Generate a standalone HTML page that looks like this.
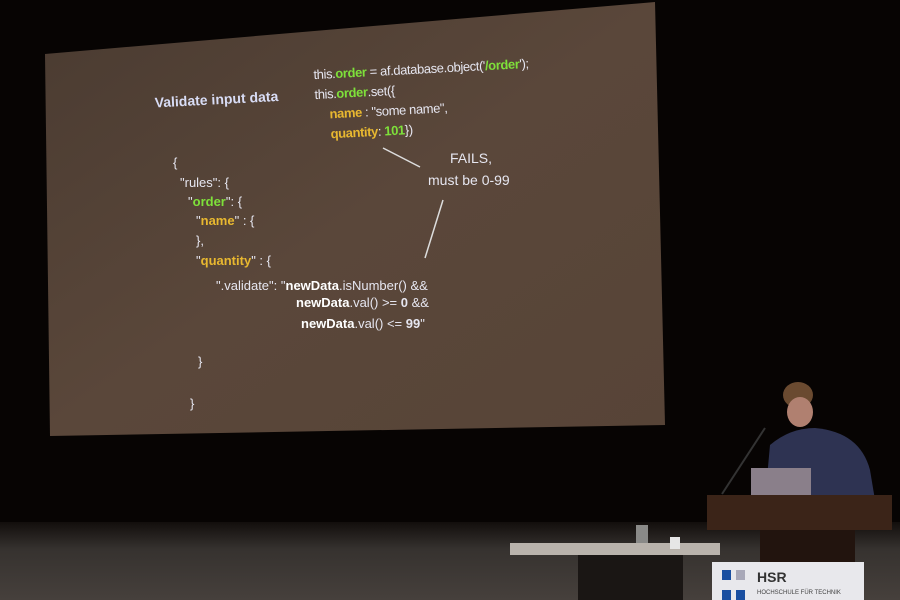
<!DOCTYPE html>
<html><head><meta charset="utf-8"><style>
html,body{margin:0;padding:0;background:#060302;}
svg{display:block}
</style></head><body>
<svg width="900" height="600" viewBox="0 0 900 600" xmlns="http://www.w3.org/2000/svg">
<defs>
<linearGradient id="scr" x1="0" y1="0" x2="1" y2="1">
<stop offset="0" stop-color="#4a3b31"/><stop offset="0.5" stop-color="#5a473a"/><stop offset="1" stop-color="#574437"/>
</linearGradient>
<linearGradient id="floor" x1="0" y1="0" x2="0" y2="1">
<stop offset="0" stop-color="#120e0c"/><stop offset="0.35" stop-color="#36322f"/><stop offset="1" stop-color="#46403c"/>
</linearGradient>
</defs>
<rect width="900" height="600" fill="#070403"/>
<rect x="0" y="522" width="900" height="78" fill="url(#floor)"/>
<polygon points="45,54 655,2 665,425 50,436" fill="url(#scr)"/>
<g font-family="Liberation Sans, sans-serif" fill="#e6e6f0">
<g transform="rotate(-3 300 200)">
<text x="160" y="100" font-size="14" font-weight="bold" fill="#d8dcf5">Validate input data</text>
<text x="320" y="80" font-size="13" letter-spacing="-0.4">this.<tspan fill="#7ee03a" font-weight="bold">order</tspan> = af.database.object('<tspan fill="#7ee03a" font-weight="bold">/order</tspan>');</text>
<text x="320" y="100" font-size="13" letter-spacing="-0.4">this.<tspan fill="#7ee03a" font-weight="bold">order</tspan>.set({</text>
<text x="334" y="120" font-size="13" letter-spacing="-0.4"><tspan fill="#e8b830" font-weight="bold">name</tspan> : "some name",</text>
<text x="334" y="140" font-size="13" letter-spacing="-0.4"><tspan fill="#e8b830" font-weight="bold">quantity</tspan>: <tspan fill="#7ee03a" font-weight="bold">101</tspan>})</text>
</g>
<text x="450" y="163" font-size="14">FAILS,</text>
<text x="428" y="185" font-size="14">must be 0-99</text>
<line x1="383" y1="148" x2="420" y2="167" stroke="#ddd" stroke-width="1.5"/>
<line x1="443" y1="200" x2="425" y2="258" stroke="#ddd" stroke-width="1.5"/>
<text x="173" y="167" font-size="13">{</text>
<text x="180" y="187" font-size="13">"rules": {</text>
<text x="188" y="206" font-size="13">"<tspan fill="#7ee03a" font-weight="bold">order</tspan>": {</text>
<text x="196" y="225" font-size="13">"<tspan fill="#e8b830" font-weight="bold">name</tspan>" : {</text>
<text x="196" y="245" font-size="13">},</text>
<text x="196" y="265" font-size="13">"<tspan fill="#e8b830" font-weight="bold">quantity</tspan>" : {</text>
<text x="216" y="290" font-size="13">".validate": "<tspan font-weight="bold" fill="#fff">newData</tspan>.isNumber() &amp;&amp;</text>
<text x="296" y="307" font-size="13"><tspan font-weight="bold" fill="#fff">newData</tspan>.val() &gt;= <tspan font-weight="bold">0</tspan> &amp;&amp;</text>
<text x="301" y="328" font-size="13"><tspan font-weight="bold" fill="#fff">newData</tspan>.val() &lt;= <tspan font-weight="bold">99</tspan>"</text>
<text x="198" y="366" font-size="13">}</text>
<text x="190" y="408" font-size="13">}</text>
</g>
<!-- speaker -->
<ellipse cx="798" cy="395" rx="15" ry="13" fill="#6a4a30"/>
<ellipse cx="800" cy="412" rx="13" ry="15" fill="#b08070"/>
<path d="M770 445 Q790 428 815 428 Q860 432 870 470 L875 500 L765 500 Z" fill="#2e3352"/>
<rect x="751" y="468" width="60" height="28" fill="#8a7f8a"/>
<line x1="722" y1="494" x2="765" y2="428" stroke="#333" stroke-width="2"/>
<rect x="707" y="495" width="185" height="35" fill="#3b2418"/>
<rect x="760" y="530" width="95" height="40" fill="#22140e"/>
<rect x="510" y="543" width="210" height="12" fill="#b9b3ac"/>
<rect x="578" y="555" width="105" height="45" fill="#1a1614"/>
<rect x="636" y="525" width="12" height="18" fill="#8a8a88"/>
<rect x="670" y="537" width="10" height="12" fill="#e6e6e6"/>
<rect x="712" y="562" width="152" height="38" fill="#e8e8ec"/>
<rect x="722" y="570" width="9" height="10" fill="#1a4fa0"/>
<rect x="736" y="570" width="9" height="10" fill="#a8a8b8"/>
<rect x="722" y="590" width="9" height="10" fill="#1a4fa0"/>
<rect x="736" y="590" width="9" height="10" fill="#1a4fa0"/>
<text x="757" y="582" font-family="Liberation Sans, sans-serif" font-size="14" font-weight="bold" fill="#333">HSR</text>
<text x="757" y="594" font-family="Liberation Sans, sans-serif" font-size="6" fill="#444">HOCHSCHULE FÜR TECHNIK</text>
</svg>
</body></html>
